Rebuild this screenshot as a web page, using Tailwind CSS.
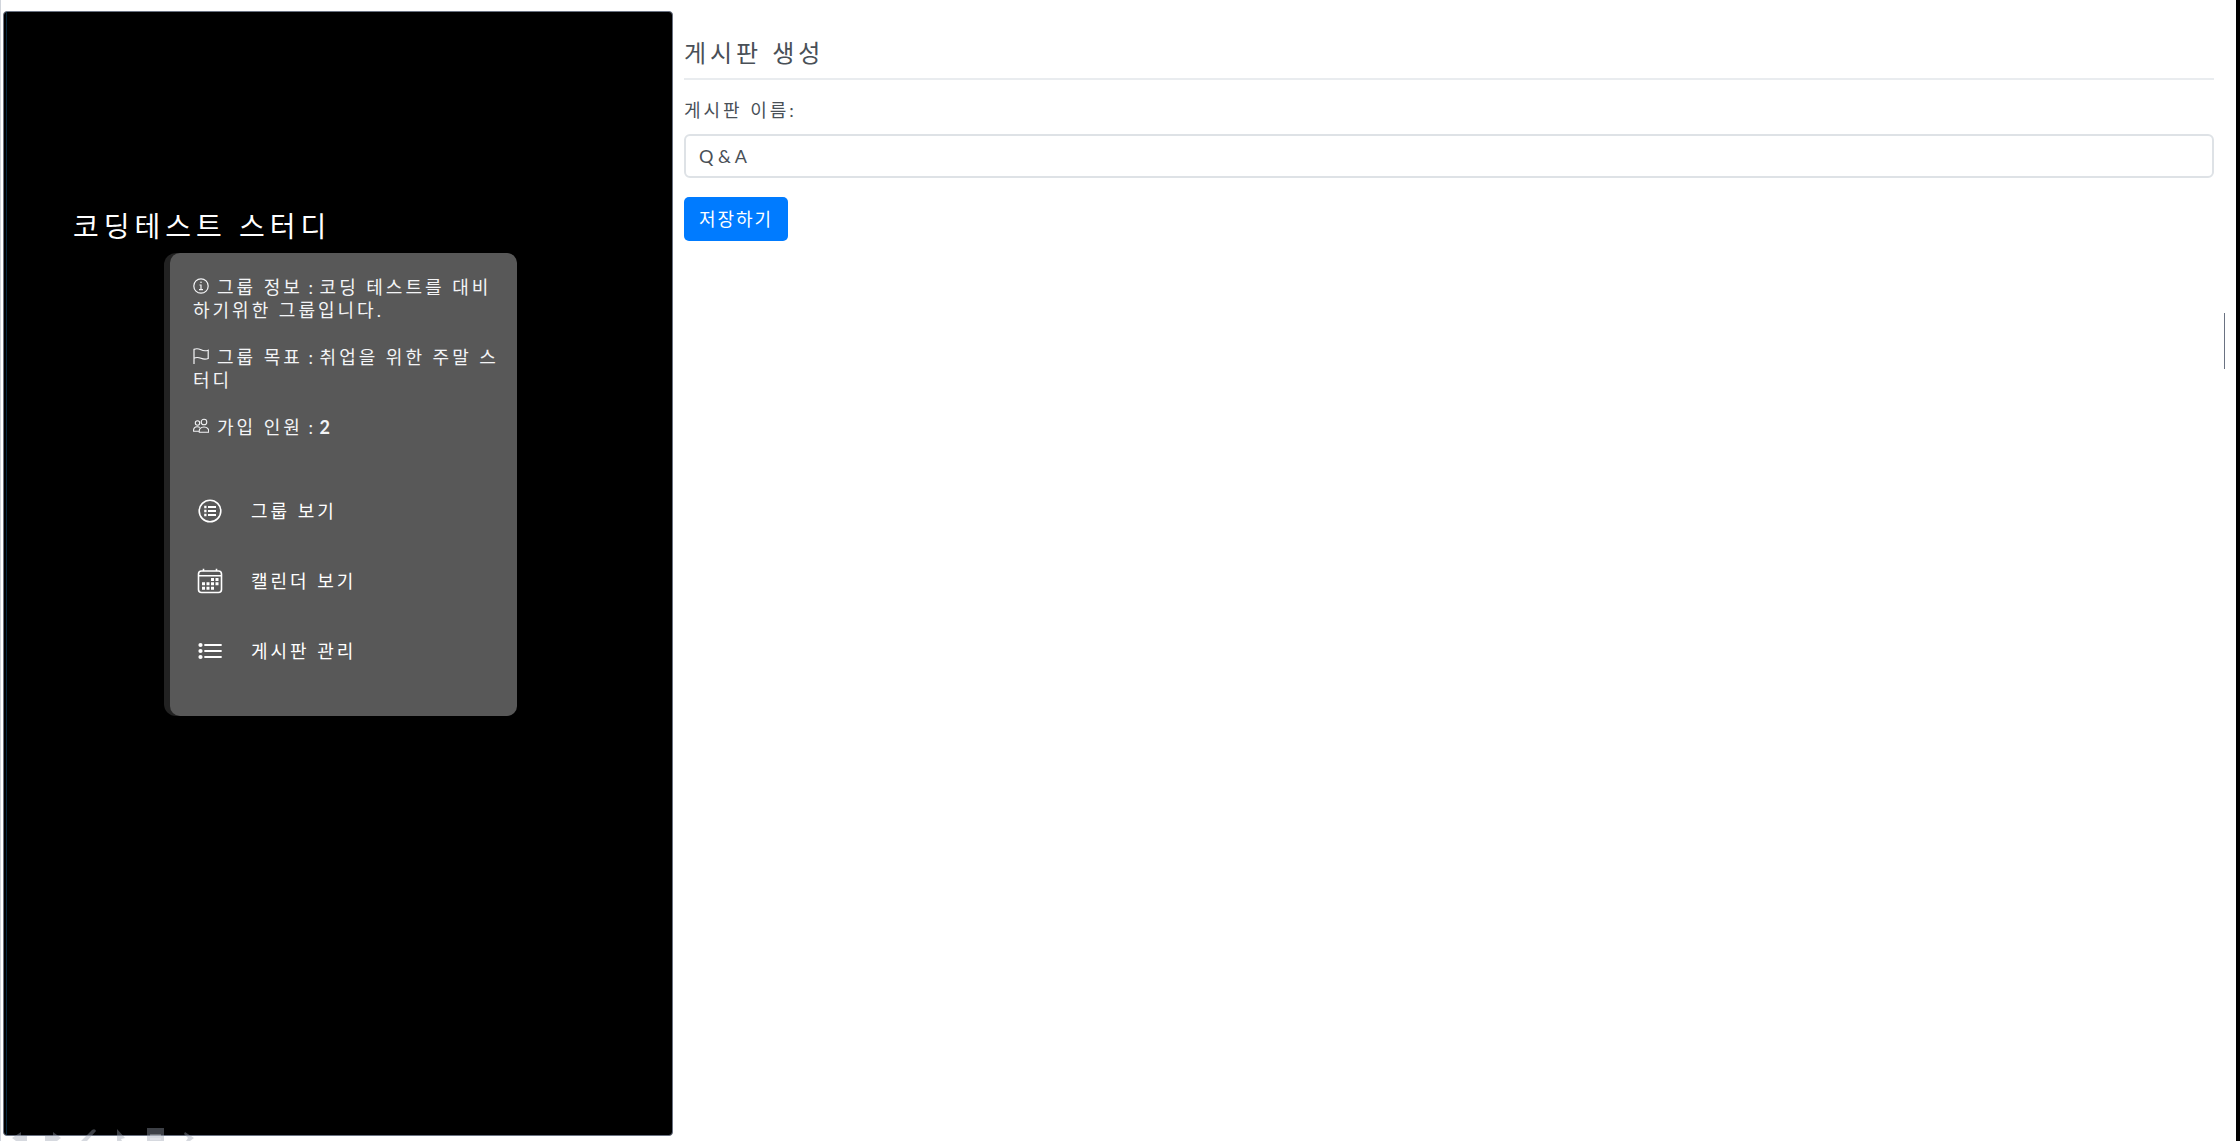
<!DOCTYPE html>
<html lang="ko">
<head>
<meta charset="utf-8">
<meta name="viewport" content="width=device-width, initial-scale=1">
<title>게시판 생성</title>
<script src="https://cdn.jsdelivr.net/npm/@tailwindcss/browser@4"></script>
</head>
<body class="relative flex min-h-screen gap-[11px] overflow-hidden border-r-4 border-l border-r-black border-l-gray-300 bg-white pt-[11px] pb-[5px] pl-[2px] font-[Lato,'Noto_Sans_CJK_KR',sans-serif] text-lg text-[#495057]">

  <aside class="flex w-[30%] shrink-0 rounded-sm border border-gray-500 bg-black pl-[2px] text-white">
    <div class="w-px shrink-0 bg-[#06263d]"></div>
    <div class="min-w-0 flex-1 pt-[189px]">
    <h1 class="mb-0.5 ml-[66px] text-[28px] leading-[50px] tracking-[5px]">코딩테스트 스터디</h1>
    <div class="ml-[157px] w-[353px] rounded-xl bg-[#222] pl-[6px]">
      <div class="rounded-[10px] bg-[#585858] pt-[23px] pb-[30px] pl-[23px] tracking-[3px] text-gray-100">
        <div class="flex flex-col gap-6 pr-3 leading-[23px]">
          <p><svg class="mr-2 inline size-4 align-baseline" viewBox="0 0 16 16" fill="none" stroke="currentColor" stroke-width="1.2"><circle cx="8" cy="8" r="7.2"/><path d="M6.5 7H8v4.5M6 11.7h4" /><circle cx="8" cy="4.3" r=".8" fill="currentColor" stroke="none"/></svg>그룹 정보<span class="tracking-[1px]"> : </span>코딩 테스트를 대비하기위한 그룹입니다.</p>
          <p><svg class="mr-2 inline size-4 align-baseline" viewBox="0 0 16 16" fill="none" stroke="currentColor" stroke-width="1.2"><path d="M1 16V1.4C3.5.2 5.5.6 8 1.8s4.800 1.200 7.200.4v8.300c-2.400.9-4.700.8-7.200-.2S3.500 9 1 10.200"/></svg>그룹 목표<span class="tracking-[1px]"> : </span>취업을 위한 주말 스터디</p>
          <p><svg class="mr-2 inline size-4 align-baseline" viewBox="0 0 16 16" fill="none" stroke="currentColor" stroke-width="1.1"><circle cx="4.500" cy="5" r="2.200"/><circle cx="11" cy="4" r="2.800"/><path d="M6.300 14.300c-.6-3.500 1.500-5.300 4.700-5.300s5.100 1.900 4.600 5.300zM6 13.300H.6C.3 10 1.700 8.800 4.300 8.800c1 0 1.800.2 2.500.700"/></svg>가입 인원<span class="tracking-[1px]"> : </span><b>2</b></p>
        </div>
        <nav class="mt-[37px] text-white">
          <a href="#" class="flex h-[70px] items-center gap-7 pl-1"><svg class="size-[26px]" viewBox="0 0 26 26" fill="none" stroke="currentColor" stroke-width="1.600"><circle cx="13" cy="13" r="10.800"/><path d="M11 9h8M11 13h8M11 17h8" stroke-width="2"/><path d="M7.200 9h2.300M7.200 13h2.300M7.200 17h2.300" stroke-width="2.300"/></svg>그룹 보기</a>
          <a href="#" class="flex h-[70px] items-center gap-7 pl-1"><svg class="size-[26px]" viewBox="0 0 26 26" fill="none" stroke="currentColor" stroke-width="1.600"><rect x="1.500" y="3" width="23" height="21.500" rx="3"/><path d="M2 7.800h22M6.500.8V3M19.500.8V3"/><g stroke="none" fill="currentColor"><path d="M14 10h3v3h-3zM18.500 10h3v3h-3zM5 14.300h3v3H5zM9.500 14.300h3v3h-3zM14 14.300h3v3h-3zM18.500 14.300h3v3h-3zM5 18.700h3v3H5zM9.500 18.700h3v3h-3zM14 18.700h3v3h-3z"/></g></svg>캘린더 보기</a>
          <a href="#" class="flex h-[70px] items-center gap-7 pl-1"><svg class="size-[26px]" viewBox="0 0 26 26" fill="none" stroke="currentColor" stroke-width="1.800" stroke-linecap="round"><path d="M8 7h16M8 13h16M8 19h16"/><g stroke="none" fill="currentColor"><circle cx="3.500" cy="7" r="2.100"/><circle cx="3.500" cy="13" r="2.100"/><circle cx="3.500" cy="19" r="2.100"/></g></svg>게시판 관리</a>
        </nav>
      </div>
    </div>
    </div>
  </aside>

  <main class="min-w-0 flex-1 pt-6 pr-[22px]">
    <h2 class="border-b-2 border-[#e9ecef] pb-2 text-2xl leading-[35px] tracking-[4px]">게시판 생성</h2>
    <form class="pt-[15px]">
      <label for="board-name" class="block leading-[31px] tracking-[3px]">게시판 이름:</label>
      <input id="board-name" type="text" value="Q &amp; A" class="mt-2 block h-11 w-full rounded-md border-2 border-[#dee2e6] px-[13px] tracking-normal">
      <button type="button" class="mt-[19px] h-11 rounded-[5px] bg-[#007bff] px-[15px] tracking-[2px] text-white">저장하기</button>
    </form>
  </main>

  <div class="absolute top-[313px] right-[11px] h-14 w-px bg-gray-500"></div>

  <div class="absolute bottom-0 left-[11px] text-gray-400/40" aria-hidden="true">
    <svg class="h-[13px] w-[182px]" viewBox="0 0 182 13" fill="currentColor"><path d="M0 10 9 4v4h6v5H4zM33 8h8V4l8 6-4 3H33zM69 13 80 2q3-2 4 1L75 13zM105 1l8 9-4 1 1 2h-5zM135 0h17v13h-17zM173 4l9 6-4 3h-4l2-3-4-4z"/><path d="M138 7h11M138 11h11" stroke="white" stroke-opacity=".5"/></svg>
  </div>
</body>
</html>
